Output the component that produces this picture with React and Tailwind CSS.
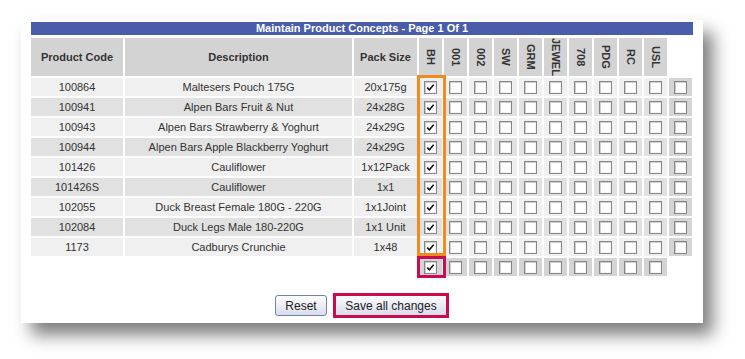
import React from "react";

const rows = [
  ["100864", "Maltesers Pouch 175G", "20x175g"],
  ["100941", "Alpen Bars Fruit & Nut", "24x28G"],
  ["100943", "Alpen Bars Strawberry & Yoghurt", "24x29G"],
  ["100944", "Alpen Bars Apple Blackberry Yoghurt", "24x29G"],
  ["101426", "Cauliflower", "1x12Pack"],
  ["101426S", "Cauliflower", "1x1"],
  ["102055", "Duck Breast Female 180G - 220G", "1x1Joint"],
  ["102084", "Duck Legs Male 180-220G", "1x1 Unit"],
  ["1173", "Cadburys Crunchie", "1x48"],
];
const cols = ["BH", "001", "002", "SW", "GRM", "JEWEL", "708", "PDG", "RC", "USL"];

function Box({ checked }) {
  return (
    <span className="w-[13px] h-[13px] border border-[#878787] bg-white shadow-[inset_1px_1px_0_#d0d0d0,inset_-1px_-1px_0_#f4f4f4] flex items-center justify-center">
      {checked && (
        <svg width="9" height="9" viewBox="0 0 9 9">
          <path d="M1.3 4.6 L3.4 6.9 L7.6 1.8" stroke="#111" strokeWidth="1.6" fill="none" />
        </svg>
      )}
    </span>
  );
}

export default function App() {
  return (
    <div className="w-[745px] h-[359px] bg-white overflow-hidden font-['Liberation_Sans',Arial,sans-serif] pt-[20px] pl-[21px]">
      <div className="w-[682px] h-[303px] bg-white shadow-[10px_12px_16px_rgba(0,0,0,0.5)] pt-[2px] px-[10px]">
        <div className="h-[13px] bg-[#4a5daa] text-white text-[11px] font-bold leading-[13px] text-center">
          Maintain Product Concepts - Page 1 Of 1
        </div>
        <div className="mt-[3px] relative grid grid-cols-[92px_227px_63px_repeat(11,23px)] gap-[2px] text-[11px] text-[#333]">
          <div className="h-[38px] bg-[#d3d3d3] font-bold flex items-center justify-center">Product Code</div>
          <div className="h-[38px] bg-[#d3d3d3] font-bold flex items-center justify-center">Description</div>
          <div className="h-[38px] bg-[#d3d3d3] font-bold flex items-center justify-center">Pack Size</div>
          {cols.map((c) => (
            <div key={c} className="h-[38px] bg-[#d3d3d3] font-bold flex items-center justify-center">
              <span className="[writing-mode:vertical-rl] leading-[23px] whitespace-nowrap">{c}</span>
            </div>
          ))}
          <div className="h-[38px]" />
          {rows.map((r, i) => {
            const bg = i % 2 === 0 ? "bg-[#f0f0f0]" : "bg-[#e1e1e1]";
            return (
              <React.Fragment key={i}>
                <div className={`h-[18px] ${bg} flex items-center justify-center`}>{r[0]}</div>
                <div className={`h-[18px] ${bg} flex items-center justify-center whitespace-nowrap`}>{r[1]}</div>
                <div className={`h-[18px] ${bg} flex items-center justify-center whitespace-nowrap`}>{r[2]}</div>
                {cols.map((c, j) => (
                  <div key={c} className={`h-[18px] ${bg} flex items-center justify-center`}>
                    <Box checked={j === 0} />
                  </div>
                ))}
                <div className="h-[18px] bg-[#d4d4d4] flex items-center justify-center">
                  <Box />
                </div>
              </React.Fragment>
            );
          })}
          <div className="h-[18px]" />
          <div className="h-[18px]" />
          <div className="h-[18px]" />
          {cols.map((c, j) => (
            <div key={c} className="h-[18px] bg-[#d4d4d4] flex items-center justify-center">
              <Box checked={j === 0} />
            </div>
          ))}
          <div className="h-[18px]" />
          <div className="absolute left-[386px] top-[37px] w-[29px] h-[181px] border-[3px] border-[#f08c1e]" />
          <div className="absolute left-[386px] top-[218px] w-[29px] h-[22px] border-[3px] border-[#cc0a52]" />
        </div>
        <div className="mt-[17px] flex items-center justify-center gap-[6px] text-[12px] text-[#222]">
          <div className="w-[52px] h-[21px] border border-[#6a83ad] rounded-[3px] bg-gradient-to-b from-white to-[#dcdcea] flex items-center justify-center">
            Reset
          </div>
          <div className="w-[116px] h-[25px] border-[3px] border-[#cc0a52] bg-gradient-to-b from-[#fbfbff] to-[#dcdcea] flex items-center justify-center">
            Save all changes
          </div>
        </div>
      </div>
    </div>
  );
}
